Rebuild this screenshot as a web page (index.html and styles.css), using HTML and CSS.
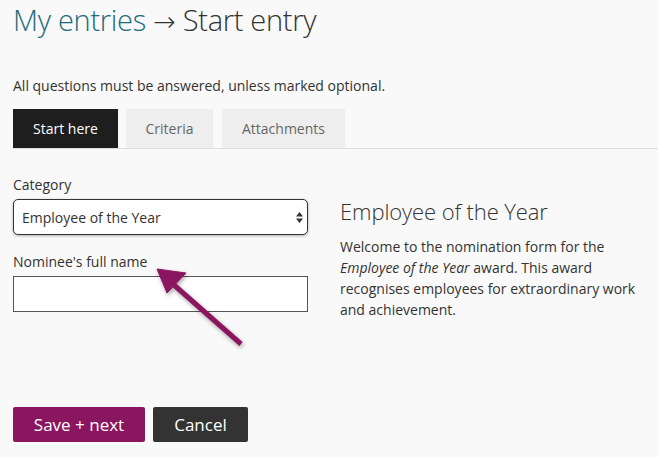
FILE: index.html
```html
<!DOCTYPE html>
<html>
<head>
<meta charset="utf-8">
<link rel="stylesheet" href="styles.css">
</head>
<body>
<div class="page">
  <h1 class="title"><span class="crumb">My entries</span> <span class="sep">→</span> Start entry</h1>
  <p class="note">All questions must be answered, unless marked optional.</p>
  <div class="tabs">
    <div class="tab active">Start here</div>
    <div class="tab">Criteria</div>
    <div class="tab">Attachments</div>
  </div>
  <div class="content">
    <div class="form">
      <label class="label">Category</label>
      <div class="select">
        <span>Employee of the Year</span>
        <svg class="updown" width="7" height="11" viewBox="0 0 7 11"><path d="M3.5 0L7 4.5H0Z M3.5 11L0 6.5H7Z" fill="#333"/></svg>
      </div>
      <label class="label label2">Nominee's full name</label>
      <div class="input"></div>
    </div>
    <div class="info">
      <h2 class="info-title">Employee of the Year</h2>
      <p class="info-text">Welcome to the nomination form for the <em>Employee of the Year</em> award. This award recognises employees for extraordinary work and achievement.</p>
    </div>
  </div>
  <div class="actions">
    <button class="btn primary">Save + next</button>
    <button class="btn dark">Cancel</button>
  </div>
</div>
<svg class="arrow" width="658" height="457" viewBox="0 0 658 457">
  <defs>
    <filter id="sh" x="-20%" y="-20%" width="140%" height="140%">
      <feDropShadow dx="1" dy="2" stdDeviation="2" flood-color="#000" flood-opacity="0.35"/>
    </filter>
  </defs>
  <g filter="url(#sh)" fill="#8b1660" stroke="#8b1660">
    <line x1="241" y1="344" x2="174" y2="285" stroke-width="5"/>
    <path d="M157 269 L186 273 L167 293 Z" stroke-width="1" stroke-linejoin="round"/>
  </g>
</svg>
</body>
</html>
```
FILE: styles.css
```css
html, body {
  margin: 0;
  padding: 0;
  background: #f9f9f9;
}
body {
  font-family: "Open Sans", "Liberation Sans", sans-serif;
  color: #333;
  width: 658px;
  height: 457px;
  overflow: hidden;
  position: relative;
}
.page {
  padding: 0 0 0 13px;
}
.title {
  margin: 0;
  padding-top: 0;
  font-size: 29px;
  font-weight: 300;
  line-height: 40px;
  color: #333;
  letter-spacing: -0.3px;
}
.crumb {
  color: #1b6b7b;
}
.sep {
  font-family: "DejaVu Sans", sans-serif;
  font-weight: 300;
  font-size: 27px;
}
.note {
  margin: 34px 0 0;
  font-size: 14px;
  line-height: 20px;
}
.tabs {
  display: flex;
  gap: 8px;
  margin-top: 13px;
  border-bottom: 1px solid #ddd;
  height: 39px;
}
.tab {
  background: #eeeeee;
  color: #666;
  font-size: 14px;
  line-height: 39px;
  height: 39px;
  box-sizing: border-box;
  text-align: center;
}
.tab:nth-child(2) { width: 87px; }
.tab:nth-child(3) { width: 123px; margin-left: 1px; }
.tab.active {
  background: #1e1e1e;
  color: #fff;
  width: 105px;
}
.content {
  display: flex;
  align-items: flex-start;
  margin-top: 27px;
}
.form {
  width: 295px;
  display: flex;
  flex-direction: column;
}
.label {
  font-size: 14px;
  line-height: 18px;
  color: #333;
}
.label2 {
  margin-top: 18px;
}
.select {
  margin-top: 5px;
  height: 36px;
  box-sizing: border-box;
  border: 1px solid #333;
  border-radius: 5px;
  background: #fff;
  box-shadow: 0 1px 3px rgba(0,0,0,0.3);
  display: flex;
  align-items: center;
  justify-content: space-between;
  padding: 0 4px 0 8px;
  font-size: 14px;
}
.input {
  margin-top: 5px;
  height: 36px;
  box-sizing: border-box;
  border: 1px solid #555;
  background: #fff;
}
.info {
  margin-left: 32px;
  padding-top: 20px;
}
.info-title {
  margin: 0;
  font-size: 22px;
  font-weight: 300;
  line-height: 30px;
  letter-spacing: -0.1px;
  color: #333;
}
.info-text {
  margin: 10px 0 0;
  font-size: 14px;
  line-height: 21px;
  width: 318px;
}
.actions {
  display: flex;
  gap: 8px;
  margin-top: 87px;
}
.btn {
  font-family: "Open Sans", "Liberation Sans", sans-serif;
  font-size: 17px;
  border: none;
  border-radius: 2px;
  height: 35px;
  color: #fff;
  padding: 0;
  line-height: 35px;
}
.btn.primary {
  background: #8b1660;
  width: 132px;
}
.btn.dark {
  background: #333;
  width: 95px;
}
.arrow {
  position: absolute;
  left: 0;
  top: 0;
  pointer-events: none;
}
```
